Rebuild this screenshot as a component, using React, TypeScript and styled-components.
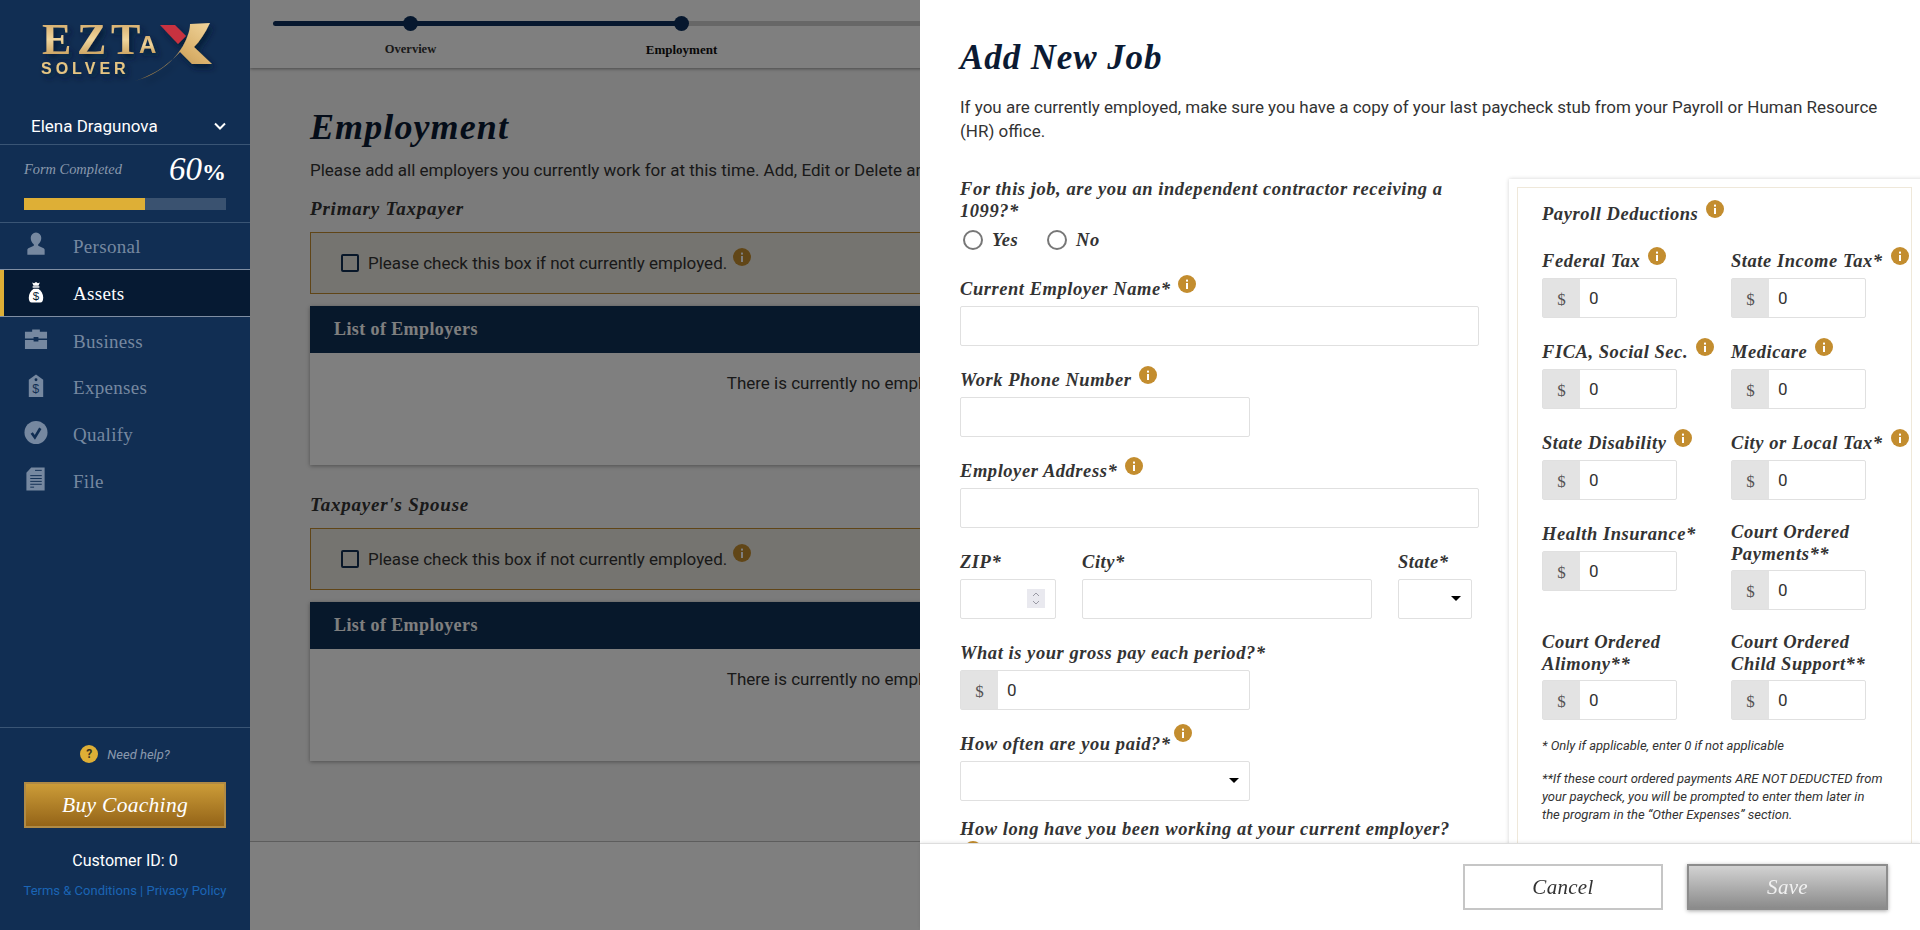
import React from "react";
import styled, { createGlobalStyle } from "styled-components";

const serif = `"Liberation Serif", serif`;
const sans = `Roboto, sans-serif`;

const GlobalStyle = createGlobalStyle`
  html, body {
    margin: 0;
    padding: 0;
    height: 100%;
    overflow: hidden;
    font-family: ${sans};
  }
  * {
    box-sizing: border-box;
  }
`;

const Page = styled.div`
  display: flex;
  width: 100%;
  height: 930px;
  overflow: hidden;
`;

/* sidebar */

const Sidebar = styled.aside`
  flex: 0 0 250px;
  width: 250px;
  min-width: 0;
  height: 930px;
  background: #112e53;
  display: flex;
  flex-direction: column;
  position: relative;
  z-index: 3;
`;

const LogoWrap = styled.div`
  height: 108px;
`;

const UserRow = styled.div`
  height: 37px;
  padding: 0 23px 0 31px;
  display: flex;
  align-items: center;
  justify-content: space-between;
  color: #fff;
  font-size: 17px;
  border-bottom: 1px solid #3a5575;
`;

const Progress = styled.div`
  height: 77.5px;
  padding: 8px 24px 0;
  border-bottom: 1px solid #3a5575;
`;

const ProgressTop = styled.div`
  display: flex;
  align-items: center;
  justify-content: space-between;
  height: 32px;
`;

const ProgressLabel = styled.span`
  font-family: ${serif};
  font-style: italic;
  font-size: 14.4px;
  color: #8a99ad;
`;

const ProgressValue = styled.span`
  font-family: ${serif};
  font-style: italic;
  font-size: 33px;
  color: #fff;
`;

const PercentSign = styled.span`
  font-style: normal;
  font-weight: 700;
  font-size: 24px;
`;

const ProgressTrack = styled.div`
  height: 12px;
  margin-top: 13px;
  background: #3a5270;
`;

const ProgressFill = styled.div`
  height: 100%;
  background: #deaf36;
`;

const NavRow = styled.div<{ $active?: boolean }>`
  height: ${p => (p.$active ? "48px" : "46.75px")};
  padding-left: 24px;
  display: flex;
  align-items: center;
  gap: 25px;
  font-family: ${serif};
  font-size: 19px;
  letter-spacing: 0.3px;
  color: ${p => (p.$active ? "#fff" : "#7688a0")};
  background: ${p => (p.$active ? "#061a33" : "transparent")};
  border-top: ${p => (p.$active ? "1px solid #7f8ea3" : "none")};
  border-bottom: ${p => (p.$active ? "1px solid #7f8ea3" : "none")};
  box-shadow: ${p => (p.$active ? "inset 4px 0 0 #deaf36" : "none")};
`;

const NavIcon = styled.svg`
  width: 24px;
  height: 24px;
  flex: none;
  margin-top: -3px;
`;

const NavText = styled.span`
  padding-top: 2px;
`;

const SideBottom = styled.div`
  margin-top: auto;
  height: 203px;
  padding: 16px 24px 0;
  border-top: 1px solid #3a5575;
  display: flex;
  flex-direction: column;
  align-items: center;
`;

const HelpRow = styled.div`
  display: flex;
  align-items: center;
  gap: 9px;
  height: 20px;
  font-size: 13px;
  font-style: italic;
  color: #8a99ad;
`;

const HelpBadge = styled.span`
  width: 18px;
  height: 18px;
  border-radius: 50%;
  background: #deaf36;
  color: #3a3320;
  font-size: 12px;
  font-weight: 700;
  font-style: normal;
  display: flex;
  align-items: center;
  justify-content: center;
`;

const CoachButton = styled.div`
  width: 202px;
  height: 46px;
  margin-top: 18px;
  display: flex;
  align-items: center;
  justify-content: center;
  border: 2px solid #b08a45;
  background: linear-gradient(#cc9c38, #946418);
  color: #fff;
  font-family: ${serif};
  font-style: italic;
  font-size: 21.5px;
  letter-spacing: 0.3px;
`;

const CustomerId = styled.div`
  margin-top: 23px;
  color: #fff;
  font-size: 16px;
`;

const LegalLinks = styled.div`
  margin-top: 13px;
  color: #1b65b5;
  font-size: 13px;
  white-space: nowrap;
`;

/* page behind the drawer */

const Main = styled.main`
  flex: 1;
  min-width: 0;
  height: 930px;
  display: flex;
  flex-direction: column;
  background: #f6f6f6;
`;

const Stepper = styled.div`
  flex: none;
  height: 68px;
  padding: 16px 0 0 23px;
  display: flex;
  background: #fff;
  box-shadow: 0 1px 3px rgba(0, 0, 0, 0.4);
  position: relative;
`;

const Step = styled.div<{ $first?: boolean; $state: "done" | "current" | "todo" }>`
  flex: 0 0 ${p => (p.$first ? "273px" : "271px")};
  padding-left: ${p => (p.$first ? "2px" : "0")};
  display: flex;
  flex-direction: column;
  align-items: center;
  position: relative;
  &::before {
    content: "";
    position: absolute;
    left: 0;
    right: 0;
    top: 5px;
    height: 5px;
    border-radius: ${p => (p.$first ? "3px 0 0 3px" : "0")};
    background: ${p =>
      p.$state === "done"
        ? "#0c2f5c"
        : p.$state === "current"
          ? "linear-gradient(to right, #0c2f5c 50%, #cfcfcf 50%)"
          : "#cfcfcf"};
  }
`;

const StepDot = styled.span`
  width: 15px;
  height: 15px;
  border-radius: 50%;
  background: #0c2f5c;
  position: relative;
`;

const StepLabel = styled.span<{ $current?: boolean }>`
  margin-top: 11px;
  font-family: ${serif};
  font-weight: 700;
  font-size: ${p => (p.$current ? "13px" : "12.5px")};
  color: ${p => (p.$current ? "#111" : "#333")};
`;

const Content = styled.div`
  flex: 1;
  padding: 41px 60px 0;
  color: #333;
`;

const PageTitle = styled.h1`
  margin: 0;
  height: 36px;
  line-height: 36px;
  font-family: ${serif};
  font-style: italic;
  font-weight: 700;
  font-size: 36px;
  letter-spacing: 1.1px;
  color: #0b1a33;
`;

const PageIntro = styled.p`
  margin: 13px 0 0;
  font-size: 17px;
  line-height: 24px;
  white-space: nowrap;
`;

const SectionName = styled.h3<{ $spaced?: boolean }>`
  margin: ${p => (p.$spaced ? "28px" : "15px")} 0 0;
  height: 24px;
  line-height: 24px;
  font-family: ${serif};
  font-style: italic;
  font-weight: 700;
  font-size: 19px;
  letter-spacing: 0.8px;
`;

const NoticeBox = styled.div`
  height: 62px;
  margin-top: 11px;
  padding-left: 30px;
  display: flex;
  align-items: center;
  gap: 9px;
  border: 1px solid #c08a2e;
  background: #ebe9e1;
  font-size: 17px;
`;

const CheckBox = styled.span`
  width: 18px;
  height: 18px;
  border: 2px solid #112e53;
  border-radius: 2px;
`;

const ListCard = styled.section`
  margin-top: 12px;
  height: 159px;
  background: #fff;
  box-shadow: 0 1px 4px rgba(0, 0, 0, 0.35);
`;

const ListHead = styled.div`
  height: 47px;
  padding-left: 24px;
  display: flex;
  align-items: center;
  background: #0f3056;
  color: #fff;
  font-family: ${serif};
  font-weight: 700;
  font-size: 18px;
  letter-spacing: 0.4px;
`;

const ListEmpty = styled.div`
  padding: 18px 7px 0 0;
  text-align: center;
  font-size: 17px;
  line-height: 24px;
  white-space: nowrap;
`;

const PageFooter = styled.div`
  flex: none;
  height: 89px;
  background: #fff;
  border-top: 1px solid #bbb;
`;

const Backdrop = styled.div`
  position: fixed;
  inset: 0;
  background: rgba(0, 0, 0, 0.5);
  z-index: 2;
`;

/* drawer */

const Drawer = styled.div`
  position: fixed;
  top: 0;
  right: 0;
  bottom: 0;
  width: 1000px;
  background: #fff;
  z-index: 4;
  display: flex;
  flex-direction: column;
`;

const DrawerBody = styled.div`
  flex: 1;
  min-height: 0;
  overflow: hidden;
  padding: 40px 0 0 40px;
`;

const DrawerTitle = styled.h2`
  margin: 0;
  height: 36px;
  line-height: 36px;
  font-family: ${serif};
  font-style: italic;
  font-weight: 700;
  font-size: 35px;
  letter-spacing: 0.9px;
  color: #0b1a33;
`;

const DrawerIntro = styled.p`
  margin: 19px 0 0;
  width: 930px;
  font-size: 17px;
  line-height: 24px;
  color: #333;
`;

const Columns = styled.div`
  margin-top: 35px;
  display: flex;
  align-items: flex-start;
`;

const LeftColumn = styled.div`
  flex: 0 0 519px;
`;

const Field = styled.div<{ $w?: number; $tight?: boolean }>`
  width: ${p => (p.$w ? `${p.$w}px` : "auto")};
  margin-bottom: ${p => (p.$tight ? "17px" : "23px")};
`;

const Label = styled.label`
  display: block;
  margin-bottom: 6px;
  font-family: ${serif};
  font-style: italic;
  font-weight: 700;
  font-size: 18.5px;
  line-height: 22px;
  letter-spacing: 0.55px;
  color: #333;
`;

const Info = styled.svg<{ $lift?: number; $gap?: number }>`
  width: 18px;
  height: 18px;
  margin: -12px 0 0 ${p => p.$gap ?? 8}px;
  vertical-align: ${p => p.$lift ?? 0}px;
`;

const RadioRow = styled.div`
  display: flex;
  align-items: center;
  height: 28px;
  margin: -2px 0 24px;
`;

const Radio = styled.input`
  appearance: none;
  width: 20px;
  height: 20px;
  margin: 0 9px 0 3px;
  border: 2px solid #777;
  border-radius: 50%;
  background: #fff;
`;

const RadioText = styled.span`
  width: 52px;
  font-family: ${serif};
  font-style: italic;
  font-weight: 700;
  font-size: 18.5px;
  letter-spacing: 0.55px;
  color: #333;
`;

const TextInput = styled.input<{ $w?: number }>`
  display: block;
  width: ${p => (p.$w ? `${p.$w}px` : "100%")};
  height: 40px;
  padding: 0 10px;
  border: 1px solid #e0e0e0;
  border-radius: 2px;
  background: #fff;
  font-family: ${sans};
  font-size: 16px;
  color: #333;
  outline: none;
  &::-webkit-inner-spin-button {
    display: none;
  }
`;

const ZipWrap = styled.div`
  position: relative;
`;

const ZipSpinner = styled.svg`
  position: absolute;
  right: 11px;
  top: 10px;
  width: 18px;
  height: 19px;
  background: #e9e9ef;
`;

const AddressRow = styled.div`
  display: flex;
  gap: 26px;
`;

const SelectWrap = styled.div<{ $w: number }>`
  position: relative;
  width: ${p => p.$w}px;
  &::after {
    content: "";
    position: absolute;
    right: 11px;
    top: 17px;
    border-left: 5px solid transparent;
    border-right: 5px solid transparent;
    border-top: 5px solid #000;
    pointer-events: none;
  }
`;

const Select = styled.select`
  display: block;
  appearance: none;
  width: 100%;
  height: 40px;
  border: 1px solid #e0e0e0;
  border-radius: 2px;
  background: #fff;
  outline: none;
`;

const Money = styled.div<{ $w: number }>`
  display: flex;
  width: ${p => p.$w}px;
  height: 40px;
  border: 1px solid #e0e0e0;
  border-radius: 2px;
  background: #fff;
`;

const MoneySign = styled.span`
  flex: 0 0 37px;
  display: flex;
  align-items: center;
  justify-content: center;
  padding-top: 3px;
  background: #e3e3e3;
  font-family: ${serif};
  font-size: 17px;
  color: #555;
`;

const MoneyInput = styled.input`
  flex: 1;
  min-width: 0;
  padding: 0 9px;
  border: none;
  background: transparent;
  font-family: ${sans};
  font-size: 17px;
  color: #333;
  outline: none;
`;

const DeductionsOuter = styled.div`
  flex: none;
  width: 420px;
  height: 700px;
  margin: 1px 0 0 30px;
  padding: 8px 0 0 8px;
  box-shadow: 0 0 4px rgba(0, 0, 0, 0.18);
`;

const DeductionsInner = styled.div`
  width: 395px;
  height: 100%;
  padding: 15px 0 0 24px;
  border: 1px solid #efe8da;
`;

const DeductionsTitle = styled(Label)`
  margin-bottom: 25px;
`;

const DeductionGrid = styled.div`
  display: grid;
  grid-template-columns: 189px 170px;
  row-gap: 23px;
  align-items: start;
`;

const Deduction = styled.div<{ $tall?: boolean }>`
  margin-top: ${p => (p.$tall ? "-2px" : "0")};
  white-space: nowrap;
  ${Label} {
    margin-bottom: ${p => (p.$tall ? "5px" : "6px")};
  }
`;

const Fine = styled.p<{ $gap: number }>`
  margin: ${p => p.$gap}px 0 0;
  width: 350px;
  font-size: 13px;
  font-style: italic;
  line-height: 18px;
  color: #333;
`;

const DrawerFooter = styled.div`
  flex: none;
  height: 87px;
  padding: 20px 32px 0 0;
  display: flex;
  justify-content: flex-end;
  gap: 24px;
  background: #fff;
  border-top: 1px solid #ddd;
  box-shadow: 0 -1px 3px rgba(0, 0, 0, 0.08);
  position: relative;
`;

const FooterButton = styled.div<{ $primary?: boolean }>`
  width: ${p => (p.$primary ? "201px" : "200px")};
  height: 46px;
  display: flex;
  align-items: center;
  justify-content: center;
  font-family: ${serif};
  font-style: italic;
  font-size: 21px;
  letter-spacing: 0.3px;
  border: 2px solid ${p => (p.$primary ? "#8c8c8c" : "#c6c6c6")};
  background: ${p => (p.$primary ? "linear-gradient(#d2d2d2, #8b8b8b)" : "#fff")};
  color: ${p => (p.$primary ? "#f1f1f1" : "#333")};
  box-shadow: ${p => (p.$primary ? "0 1px 4px rgba(0, 0, 0, 0.35)" : "none")};
`;

const InfoIcon: React.FC<{ lift?: number; gap?: number }> = ({ lift, gap }) => (
  <Info viewBox="0 0 18 18" $lift={lift} $gap={gap}>
    <circle cx="9" cy="9" r="9" fill="#c38d2f" />
    <rect x="8" y="8" width="2" height="6" fill="#fff" />
    <rect x="8" y="4.6" width="2" height="2" fill="#fff" />
  </Info>
);

const Logo = () => (
  <svg width="250" height="108" viewBox="0 0 250 108">
    <defs>
      <linearGradient id="gold" x1="0" y1="0" x2="0" y2="1">
        <stop offset="0" stopColor="#c99a55" />
        <stop offset="0.5" stopColor="#f0d59c" />
        <stop offset="1" stopColor="#b6873f" />
      </linearGradient>
      <linearGradient id="swoosh" x1="0" y1="1" x2="1" y2="0">
        <stop offset="0" stopColor="#8f6d36" />
        <stop offset="0.6" stopColor="#d9b06a" />
        <stop offset="1" stopColor="#f0d59c" />
      </linearGradient>
      <filter id="logoShadow" x="-10%" y="-10%" width="130%" height="140%">
        <feDropShadow dx="3" dy="4" stdDeviation="3" floodColor="#061a33" floodOpacity="0.8" />
      </filter>
    </defs>
    <g filter="url(#logoShadow)">
      <text x="42" y="54" fontFamily="Liberation Serif" fontWeight="700" fontSize="44" fill="url(#gold)">E</text>
      <text x="77" y="54" fontFamily="Liberation Serif" fontWeight="700" fontSize="44" fill="url(#gold)">Z</text>
      <text x="111" y="54" fontFamily="Liberation Serif" fontWeight="700" fontSize="44" fill="url(#gold)">T</text>
      <text x="139" y="53" fontFamily="Liberation Sans" fontWeight="700" fontSize="24" fill="url(#gold)">A</text>
      <text x="41" y="74" fontFamily="Liberation Sans" fontWeight="700" fontSize="16" letterSpacing="4" fill="#e6c583">SOLVER</text>
      <path d="M160 25h15l11 11-8 8z" fill="#c8333f" />
      <path d="M135 81C160 74 178 58 186 40 189 33 190 28 190 24L210 23C205 33 200 41 194 47L212 64H192L180 52C165 68 150 76 135 81Z" fill="url(#swoosh)" />
    </g>
  </svg>
);

const navIcons: Record<string, React.ReactNode> = {
  Personal: (
    <path d="M12 0.5a5.5 5.5 0 0 1 5.5 5.8c0 3-1.6 5.5-3.2 6.5v1.6l5.7 2.4c.7.3 1 1 1 1.7v5.2H3v-5.2c0-.7.3-1.4 1-1.7l5.7-2.4v-1.6C8.100 11.800 6.500 9.300 6.500 6.300A5.500 5.500 0 0 1 12 .5z" fill="currentColor" />
  ),
  Assets: (
    <>
      <path d="M8 2.500l2 .8 2-1.300 2 1.300 2-.8-1.400 3.500H9.400z" fill="currentColor" />
      <rect x="8.500" y="6.500" width="7" height="1.500" fill="currentColor" />
      <path d="M9.500 9h5c3 2 5 5.500 5 9.500 0 3-1 5-3 5H7.500c-2 0-3-2-3-5C4.500 14.500 6.500 11 9.500 9z" fill="currentColor" />
      <text x="12" y="21" textAnchor="middle" fontFamily="Liberation Sans" fontSize="12" fill="#061a33">$</text>
    </>
  ),
  Business: (
    <>
      <path d="M8 5V2.500h8V5h7.500v7H14.500v-1.500h-5V12H.500V5z" fill="currentColor" />
      <path d="M.500 13.500H9.500V15h5v-1.500h9V23H.500z" fill="currentColor" />
    </>
  ),
  Expenses: (
    <>
      <path d="M12 .5l7.500 5.500V24H4.500V6z" fill="currentColor" />
      <circle cx="12" cy="6" r="1.500" fill="#112e53" />
      <text x="12" y="20" textAnchor="middle" fontFamily="Liberation Sans" fontSize="13" fill="#112e53">$</text>
    </>
  ),
  Qualify: (
    <>
      <circle cx="12" cy="12" r="12" fill="currentColor" />
      <path d="M7.500 12.500l3.300 4.500 5.700-9.500" fill="none" stroke="#112e53" strokeWidth="2.800" />
    </>
  ),
  File: (
    <>
      <path d="M7 .5h14v24H2V6z" fill="currentColor" />
      <path d="M6 9h12M6 12h12M6 15h12M6 18h12M6 21h4M11 3.500h7" stroke="#112e53" strokeWidth="1" />
    </>
  ),
};

const navItems = ["Personal", "Assets", "Business", "Expenses", "Qualify", "File"];

type DeductionItem = { label: React.ReactNode; tall?: boolean; info?: boolean };

const deductions: DeductionItem[] = [
  { label: "Federal Tax", info: true },
  { label: "State Income Tax*", info: true },
  { label: "FICA, Social Sec.", info: true },
  { label: "Medicare", info: true },
  { label: "State Disability", info: true },
  { label: "City or Local Tax*", info: true },
  { label: "Health Insurance*" },
  { label: <>Court Ordered<br />Payments**</>, tall: true },
  { label: <>Court Ordered<br />Alimony**</>, tall: true },
  { label: <>Court Ordered<br />Child Support**</>, tall: true },
];

const MoneyField: React.FC<{ w: number }> = ({ w }) => (
  <Money $w={w}>
    <MoneySign>$</MoneySign>
    <MoneyInput defaultValue="0" />
  </Money>
);

const EmployerSection: React.FC<{ name: string; spaced?: boolean }> = ({ name, spaced }) => (
  <>
    <SectionName $spaced={spaced}>{name}</SectionName>
    <NoticeBox>
      <CheckBox />
      <span>
        Please check this box if not currently employed.
        <InfoIcon lift={3} gap={6} />
      </span>
    </NoticeBox>
    <ListCard>
      <ListHead>List of Employers</ListHead>
      <ListEmpty>There is currently no employment information entered for this taxpayer. Please add one above.</ListEmpty>
    </ListCard>
  </>
);

const App: React.FC = () => {
  const percent = 60;
  return (
    <Page>
      <GlobalStyle />
      <Sidebar>
        <LogoWrap>
          <Logo />
        </LogoWrap>
        <UserRow>
          Elena Dragunova
          <svg width="14" height="14" viewBox="0 0 14 14" fill="none" stroke="#fff" strokeWidth="2">
            <path d="M2 4.500l5 5 5-5" />
          </svg>
        </UserRow>
        <Progress>
          <ProgressTop>
            <ProgressLabel>Form Completed</ProgressLabel>
            <ProgressValue>
              {percent}
              <PercentSign>%</PercentSign>
            </ProgressValue>
          </ProgressTop>
          <ProgressTrack>
            <ProgressFill style={{ width: `${percent}%` }} />
          </ProgressTrack>
        </Progress>
        {navItems.map(item => (
          <NavRow key={item} $active={item === "Assets"}>
            <NavIcon viewBox="0 0 24 25">{navIcons[item]}</NavIcon>
            <NavText>{item}</NavText>
          </NavRow>
        ))}
        <SideBottom>
          <HelpRow>
            <HelpBadge>?</HelpBadge>
            Need help?
          </HelpRow>
          <CoachButton>Buy Coaching</CoachButton>
          <CustomerId>Customer ID: 0</CustomerId>
          <LegalLinks>Terms &amp; Conditions | Privacy Policy</LegalLinks>
        </SideBottom>
      </Sidebar>

      <Main>
        <Stepper>
          <Step $first $state="done">
            <StepDot />
            <StepLabel>Overview</StepLabel>
          </Step>
          <Step $state="current">
            <StepDot />
            <StepLabel $current>Employment</StepLabel>
          </Step>
          <Step $state="todo">
            <StepDot />
            <StepLabel>Investments</StepLabel>
          </Step>
        </Stepper>
        <Content>
          <PageTitle>Employment</PageTitle>
          <PageIntro>
            Please add all employers you currently work for at this time. Add, Edit or Delete any employers as needed.
          </PageIntro>
          <EmployerSection name="Primary Taxpayer" />
          <EmployerSection name="Taxpayer's Spouse" spaced />
        </Content>
        <PageFooter />
      </Main>

      <Backdrop />

      <Drawer>
        <DrawerBody>
          <DrawerTitle>Add New Job</DrawerTitle>
          <DrawerIntro>
            If you are currently employed, make sure you have a copy of your last paycheck stub from your Payroll or
            Human Resource (HR) office.
          </DrawerIntro>
          <Columns>
            <LeftColumn>
              <Label>For this job, are you an independent contractor receiving a 1099?*</Label>
              <RadioRow>
                <Radio type="radio" name="contractor" />
                <RadioText>Yes</RadioText>
                <Radio type="radio" name="contractor" />
                <RadioText>No</RadioText>
              </RadioRow>
              <Field>
                <Label>
                  Current Employer Name*
                  <InfoIcon lift={2} />
                </Label>
                <TextInput />
              </Field>
              <Field>
                <Label>
                  Work Phone Number
                  <InfoIcon lift={2} />
                </Label>
                <TextInput $w={290} />
              </Field>
              <Field>
                <Label>
                  Employer Address*
                  <InfoIcon lift={2} />
                </Label>
                <TextInput />
              </Field>
              <AddressRow>
                <Field $w={96}>
                  <Label>ZIP*</Label>
                  <ZipWrap>
                    <TextInput type="number" />
                    <ZipSpinner viewBox="0 0 18 19" fill="none" stroke="#9a9aa4" strokeWidth="1">
                      <path d="M6 7l3-3 3 3M6 12l3 3 3-3" />
                    </ZipSpinner>
                  </ZipWrap>
                </Field>
                <Field $w={290}>
                  <Label>City*</Label>
                  <TextInput />
                </Field>
                <Field $w={74}>
                  <Label>State*</Label>
                  <SelectWrap $w={74}>
                    <Select />
                  </SelectWrap>
                </Field>
              </AddressRow>
              <Field>
                <Label>What is your gross pay each period?*</Label>
                <MoneyField w={290} />
              </Field>
              <Field $tight>
                <Label>
                  How often are you paid?*
                  <InfoIcon lift={8} gap={3} />
                </Label>
                <SelectWrap $w={290}>
                  <Select />
                </SelectWrap>
              </Field>
              <Field>
                <Label>
                  How long have you been working at your current employer?
                  <br />
                  <InfoIcon gap={4} lift={-2} />
                </Label>
              </Field>
            </LeftColumn>
            <DeductionsOuter>
              <DeductionsInner>
                <DeductionsTitle>
                  Payroll Deductions
                  <InfoIcon lift={2} />
                </DeductionsTitle>
                <DeductionGrid>
                  {deductions.map((d, i) => (
                    <Deduction key={i} $tall={d.tall}>
                      <Label>
                        {d.label}
                        {d.info && <InfoIcon lift={2} />}
                      </Label>
                      <MoneyField w={135} />
                    </Deduction>
                  ))}
                </DeductionGrid>
                <Fine $gap={17}>* Only if applicable, enter 0 if not applicable</Fine>
                <Fine $gap={15}>
                  **If these court ordered payments ARE NOT DEDUCTED from
                  <br />
                  your paycheck, you will be prompted to enter them later in
                  <br />
                  the program in the “Other Expenses” section.
                </Fine>
              </DeductionsInner>
            </DeductionsOuter>
          </Columns>
        </DrawerBody>
        <DrawerFooter>
          <FooterButton>Cancel</FooterButton>
          <FooterButton $primary>Save</FooterButton>
        </DrawerFooter>
      </Drawer>
    </Page>
  );
};

export default App;
